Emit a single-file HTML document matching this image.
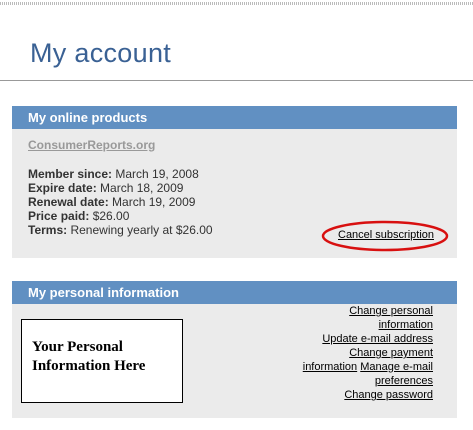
<!DOCTYPE html>
<html><head><style>
body{margin:0;width:473px;height:430px;background:#fff;font-family:"Liberation Sans",Arial,sans-serif;font-size:12px;color:#333;position:relative;overflow:hidden}
.dots{position:absolute;left:0;top:2px;width:473px;height:3px;background:repeating-linear-gradient(90deg,#bbb 0 1px,#fff 1px 2px)}
h1{position:absolute;left:30px;top:38px;margin:0;font-family:"Liberation Sans",sans-serif;font-weight:normal;font-size:27px;color:#3a6194;letter-spacing:0.3px}
.rule{position:absolute;left:0;top:80px;width:473px;height:1px;background:#999}
.box{position:absolute;left:12px;width:445px;background:#ebebeb}
.hd{background:#6190c2;color:#fff;font-weight:bold;font-size:13px;height:23px;line-height:23px;padding-left:16px}
a{color:#000;text-decoration:underline}
.p{position:absolute;left:16px;line-height:14px}
</style></head><body>
<div class="dots"></div>
<h1>My account</h1>
<div class="rule"></div>
<div class="box" style="top:106px;height:152px">
<div class="hd">My online products</div>
<div class="p" style="top:32px;color:#999;font-weight:bold;text-decoration:underline">ConsumerReports.org</div>
<div class="p" style="top:61px"><b>Member since:</b> March 19, 2008<br><b>Expire date:</b> March 18, 2009<br><b>Renewal date:</b> March 19, 2009<br><b>Price paid:</b> $26.00<br><b>Terms:</b> Renewing yearly at $26.00</div>
<a style="position:absolute;left:326px;top:123px;font-size:11px">Cancel subscription</a>
</div>
<svg style="position:absolute;left:320px;top:219px" width="130" height="34"><ellipse cx="65" cy="17" rx="62" ry="14" fill="none" stroke="#d81010" stroke-width="2.5"/></svg>
<div class="box" style="top:281px;height:137px">
<div class="hd">My personal information</div>
<div style="position:absolute;left:9px;top:38px;width:160px;height:82px;border:1px solid #000;background:#fff;font-family:'Liberation Serif',serif;font-weight:bold;font-size:15px;line-height:19px;color:#000"><div style="padding:18px 0 0 10px">Your Personal<br>Information Here</div></div>
<div style="position:absolute;right:24px;top:23px;width:200px;text-align:right;font-size:11px;line-height:14px"><a>Change personal<br>information</a><br><a>Update e-mail address</a><br><a>Change payment<br>information</a> <a>Manage e-mail<br>preferences</a><br><a>Change password</a></div>
</div>
</body></html>
